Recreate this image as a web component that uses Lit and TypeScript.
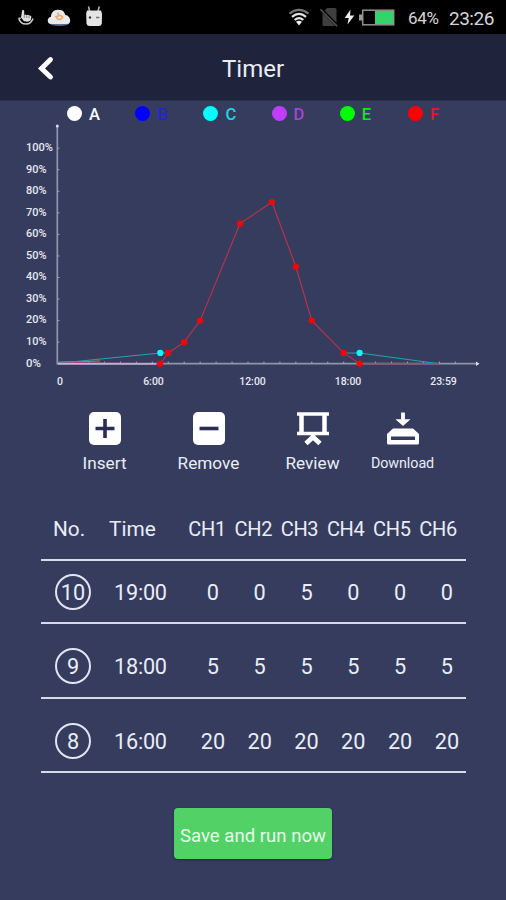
import { LitElement, html, svg, css } from "lit";
import { customElement } from "lit/decorators.js";
import { styleMap } from "lit/directives/style-map.js";

const LEGEND = [
  { name: "A", color: "#ffffff" },
  { name: "B", color: "#0000ff", text: "#2323d8" },
  { name: "C", color: "#00ffff", text: "#22d3e0" },
  { name: "D", color: "#c13cff", text: "#a544d6" },
  { name: "E", color: "#00ff00", text: "#0ce81c" },
  { name: "F", color: "#ff0000", text: "#dc1c30" },
];

const ROWS = [
  { no: 10, time: "19:00", ch: [0, 0, 5, 0, 0, 0] },
  { no: 9, time: "18:00", ch: [5, 5, 5, 5, 5, 5] },
  { no: 8, time: "16:00", ch: [20, 20, 20, 20, 20, 20] },
];

const RED: [number, number][] = [
  [6.5, 0], [7, 5], [8, 10], [9, 20], [11.5, 65],
  [13.5, 75], [15, 45], [16, 20], [18, 5], [19, 0],
];

/* Chart space: hours across, percent up. */
const px = (h: number) => 56.6 + h * 15.95;
const py = (p: number) => 239.7 - p * 2.155;
const line = (pts: [number, number][]) => pts.map(([h, p]) => `${px(h)},${py(p)}`).join(" ");

@customElement("status-bar")
class StatusBar extends LitElement {
  static styles = css`
    :host { display: flex; align-items: center; height: 34px; background: #000; color: #d6d6d6;
      font-family: Roboto, sans-serif; padding: 0 11px 0 17px; box-sizing: border-box; }
    svg { display: block; flex: none; }
    .left { display: flex; align-items: center; gap: 12px; }
    .right { display: flex; align-items: center; margin-left: auto; }
    .sim { margin-left: 10px; }
    .bolt { margin-left: 6px; }
    .bat { margin-left: 4px; }
    .pct { font-size: 17px; width: 32px; margin-left: 13px; margin-top: 2px; letter-spacing: -0.35px; }
    .clock { font-size: 19px; width: 46px; margin-left: 9px; margin-top: 2px; letter-spacing: -0.5px; white-space: nowrap; }
  `;
  render() {
    return html`
      <div class="left">
        <svg width="18" height="18" viewBox="0 0 18 18">
          <path d="M5 3.2c0-1.6 2.2-1.6 2.2 0V7l1.2-.6 1.3.8 1.3-.5 1.3.8c1.5-.3 2.2.4 2 1.8l-.6 3c-1.5 1.8-5.8 1.8-7.4.2L4 9.600z" fill="#ddd"/>
          <path d="M7.300 7v3M9.700 7.500v2.500M12 8v2" stroke="#555" stroke-width=".6"/>
          <path d="M1.500 10.200h2.200M1.800 10.500c2 7.400 12 7.400 14.200 0" fill="none" stroke="#ccc" stroke-width="1.500"/>
        </svg>
        <svg width="25" height="18" viewBox="0 0 25 18">
          <path d="M5 16.500C-.5 16-.5 9.500 4 8.700 4 4 8 1 12 2c3-.5 5.500 1.500 6.300 5 5.500.3 6.800 9 1.500 9.500z" fill="#e9e9ee"/>
          <path d="M4 16.300c5 1.200 12 1.200 16.500 0" stroke="#3e6ba4" stroke-width="1.200" fill="none"/>
          <path d="M10.500 4.500l1.500 3-3 1.200 1.800 2.300c2.500 1 5-.2 4.700-2.300L13 7.200" fill="none" stroke="#e8a868" stroke-width="1.600"/>
        </svg>
        <svg width="20" height="22" viewBox="0 0 20 22">
          <path d="M5.500 5L4.500 .5M14 5l1.300-4.500" stroke="#bbb" stroke-width="1.500"/>
          <path d="M3 4.500h14l1 3-.2 10q-.5 2.500-3 2.500H5.500q-2.500 0-3-2.500l-.3-10z" fill="#e4e4e4"/>
          <circle cx="6" cy="11.500" r="1.200" fill="#333"/><path d="M12 11.500h3.500" stroke="#777" stroke-width="1.500"/>
        </svg>
      </div>
      <div class="right">
        <svg width="22" height="18" viewBox="0 0 22 18">
          <path d="M1.500 5.600Q11-1.800 20.500 5.600" fill="none" stroke="#777" stroke-width="2"/>
          <path d="M4 8.800Q11 3 18 8.800M6.700 12Q11 8.300 15.300 12" fill="none" stroke="#e2e2e2" stroke-width="2.200"/>
          <path d="M8 13.800Q11 11.500 14 13.800L11 17.500z" fill="#f2f2f2"/>
        </svg>
        <svg class="sim" width="18" height="20" viewBox="0 0 18 20">
          <path d="M7 1h8q1.500 0 1.500 1.500v15q0 1.500-1.500 1.500H4q-1.500 0-1.500-1.500V6z" fill="#3f3f3f"/>
          <path d="M.5 1.500l17 17.500" stroke="#000" stroke-width="3"/><path d="M.2 2.200l17 17" stroke="#555" stroke-width="1.500"/>
        </svg>
        <svg class="bolt" width="11" height="16" viewBox="0 0 11 16"><path d="M6.500.5L.7 9h4L3.500 15.500 10.300 6.500H6z" fill="#eee"/></svg>
        <svg class="bat" width="36" height="17" viewBox="0 0 36 17">
          <path d="M0 5.500h3v6H0z" fill="#9a9a9a"/>
          <rect x="3.700" y="1.200" width="31" height="14.600" fill="#000" stroke="#8d9490" stroke-width="1.500"/>
          <rect x="16" y="2" width="18" height="13" fill="#35d46a"/>
        </svg>
        <span class="pct">64%</span><span class="clock">23:26</span>
      </div>`;
  }
}

@customElement("level-chart")
class LevelChart extends LitElement {
  static styles = css`
    :host { display: block; height: 266px; }
    svg { display: block; }
    text { font: 500 10.5px Roboto, sans-serif; fill: #e6e9f2; }
    .axis { stroke: #8d95ad; stroke-width: 1.7; }
    .tick { stroke: #9aa1b6; stroke-width: 1; }
    .thin { fill: none; stroke-width: 1.1; }
  `;
  render() {
    const pct = Array.from({ length: 11 }, (_, i) => i * 10);
    const hours = Array.from({ length: 25 }, (_, i) => i + 1);
    const labels: [string, number][] = [["0", 60], ["6:00", 153.5], ["12:00", 252.5], ["18:00", 348], ["23:59", 443.5]];
    return html`<svg width="506" height="266" viewBox="0 0 506 266">
      <path class="axis" d="M57.300 3V240.500M56.500 239.700H476" />
      <circle cx="57.300" cy="2" r="1.500" fill="#dce0ea"/><path d="M476 237.500l3.500 2.200-3.500 2.200z" fill="#dce0ea"/>
      ${pct.map((p) => svg`<path class="tick" d=${`M57 ${py(p)}h2.500`} />
        <text x="26" y=${py(p) + 2.8} textLength=${p === 100 ? 27 : p ? 20.5 : 15} lengthAdjust="spacingAndGlyphs">${p}%</text>`)}
      ${hours.map((h) => svg`<path class="tick" d=${`M${px(h)} 240v-2.500`} />`)}
      ${labels.map(([t, x]) => svg`<text x=${x} y="260.600" text-anchor="middle">${t}</text>`)}
      <polyline class="thin" stroke="#78a83c" points="58,238.300 100,237" />
      <polyline class="thin" stroke="#b04a8a" points="58,238.600 160,239.700" />
      <polyline class="thin" stroke="#d9c6e8" points="58,239.900 156,239.900" />
      <polyline class="thin" stroke="#24a3ae" points=${`58,238.300 76,237.500 ${line([[6.5, 5], [7, 5]])}`} />
      <polyline class="thin" stroke="#24a3ae" points=${line([[18, 5], [19, 5], [23.98, 0]])} />
      <polyline class="thin" stroke="#c0304c" points=${line([...RED, [23.98, 0]])} />
      ${[6.5, 19].map((h) => svg`<circle cx=${px(h)} cy=${py(5)} r="3.100" fill="#0ff" />`)}
      ${RED.map(([h, p]) => svg`<circle cx=${px(h)} cy=${py(p)} r="3.100" fill="#f00" />`)}
    </svg>`;
  }
}

@customElement("app-root")
class AppRoot extends LitElement {
  static styles = css`
    :host { display: flex; flex-direction: column; width: 506px; height: 900px; overflow: hidden;
      background: #363c5e; color: #e9edf7; font-family: Roboto, sans-serif; }
    svg { display: block; }
    .title { display: grid; grid-template-columns: 90px 1fr 90px; align-items: center; height: 67px;
      background: #20233c; flex: none; border-bottom: 1px solid #2c304f; box-sizing: border-box; }
    .title svg { margin: 2px 0 0 37px; }
    h1 { margin: 3px 0 0; font-size: 24px; font-weight: 400; text-align: center; }
    .legend { display: grid; grid-template-columns: repeat(6, 68.2px); padding-left: 67px; height: 23px; flex: none; }
    .key { display: flex; align-items: center; gap: 7px; font-size: 16.5px; font-weight: 500; line-height: 25px; height: 25px; }
    .dot { width: 15px; height: 15px; border-radius: 50%; flex: none; }
    .key span { margin-top: 2px; }
    .tools { display: grid; grid-template-columns: 104px 104px 104px 76px; padding-left: 52.5px; margin-top: 20px; height: 66px; flex: none; }
    .tool { display: flex; flex-direction: column; align-items: center; font-size: 17.2px; line-height: 22px; }
    .tool svg { margin-bottom: 5.500px; }
    .tool.small { font-size: 14.3px; letter-spacing: -0.05px; }
    .table { width: 425px; margin: 35px 0 0 41px; flex: none; }
    .head, .row { display: grid; align-items: center; box-sizing: border-box; border-bottom: 2px solid #d6dbea; }
    .head { grid-template-columns: 56px 75px repeat(6, 46.2px); height: 50px; font-size: 20.8px; padding: 0 0 12px 12px; white-space: nowrap; }
    .head .ch { text-align: center; font-size: 20px; letter-spacing: -0.35px; }
    .row { grid-template-columns: 59px 75.500px repeat(6, 46.800px); height: 63px; padding: 1px 0 0 14px; font-size: 21.700px; }
    .row + .row { height: 74.500px; padding-top: 12px; }
    .badge { width: 36px; height: 36px; border: 2px solid #dfe5f2; border-radius: 50%; box-sizing: border-box;
      display: flex; align-items: center; justify-content: center; padding-top: 1px; }
    .time { letter-spacing: -0.25px; padding-top: 1px; }
    .row .ch { text-align: center; padding-top: 1px; }
    .save { width: 158px; height: 51px; margin: 35px 0 0 174px; padding: 4px 0 0; border: 0; border-radius: 4px; flex: none;
      background: #52d266; color: #e4fbe8; font: 400 18.600px Roboto, sans-serif; white-space: nowrap; box-shadow: 0 1px 2px #202347; }
  `;
  render() {
    return html`
      <status-bar></status-bar>
      <header class="title">
        <svg width="18" height="25" viewBox="0 0 18 25"><path d="M13.500 3.500L4.500 12.500L13.500 21" fill="none" stroke="#fff" stroke-width="4.900" stroke-linecap="round"/></svg>
        <h1>Timer</h1>
      </header>
      <div class="legend">
        ${LEGEND.map((k) => html`<div class="key"><i class="dot" style=${styleMap({ background: k.color })}></i>
          <span style=${styleMap({ color: k.text ?? k.color })}>${k.name}</span></div>`)}
      </div>
      <level-chart></level-chart>
      <div class="tools">
        <div class="tool">
          <svg width="34" height="36" viewBox="0 0 34 36"><rect x="1" y="2" width="32" height="33" rx="5" fill="#fff"/><path d="M17 9v19M7.500 18.500h19" stroke="#292c55" stroke-width="3.600"/></svg>
          Insert</div>
        <div class="tool">
          <svg width="34" height="36" viewBox="0 0 34 36"><rect x="1" y="2" width="32" height="33" rx="5" fill="#fff"/><path d="M7.500 18.500h19" stroke="#292c55" stroke-width="3.600"/></svg>
          Remove</div>
        <div class="tool">
          <svg width="34" height="36" viewBox="0 0 34 36"><path d="M1 4h32M1 23.500h32" stroke="#fff" stroke-width="3.400"/><path d="M5.500 3v20M28.500 3v20" stroke="#fff" stroke-width="4.500"/><path d="M17 24v4M10 33.500L17 27L24 33.500" fill="none" stroke="#fff" stroke-width="4.800"/></svg>
          Review</div>
        <div class="tool small">
          <svg width="34" height="36" viewBox="0 0 34 36"><path d="M17 2.500v8" stroke="#fff" stroke-width="3.800"/><path d="M9.500 9.200L17 16l7.500-6.800z" fill="#fff"/><path fill-rule="evenodd" d="M7 18.500h20l6 5.500v9q0 1.500-1.500 1.500h-29Q1 34.500 1 33v-9zM5 26.500v3.500h24v-3.500z" fill="#fff"/></svg>
          Download</div>
      </div>
      <div class="table">
        <div class="head"><span>No.</span><span>Time</span>${[1, 2, 3, 4, 5, 6].map((n) => html`<span class="ch">CH${n}</span>`)}</div>
        ${ROWS.map((r) => html`<div class="row"><span class="badge">${r.no}</span><span class="time">${r.time}</span>
          ${r.ch.map((v) => html`<span class="ch">${v}</span>`)}</div>`)}
      </div>
      <button class="save">Save and run now</button>`;
  }
}
